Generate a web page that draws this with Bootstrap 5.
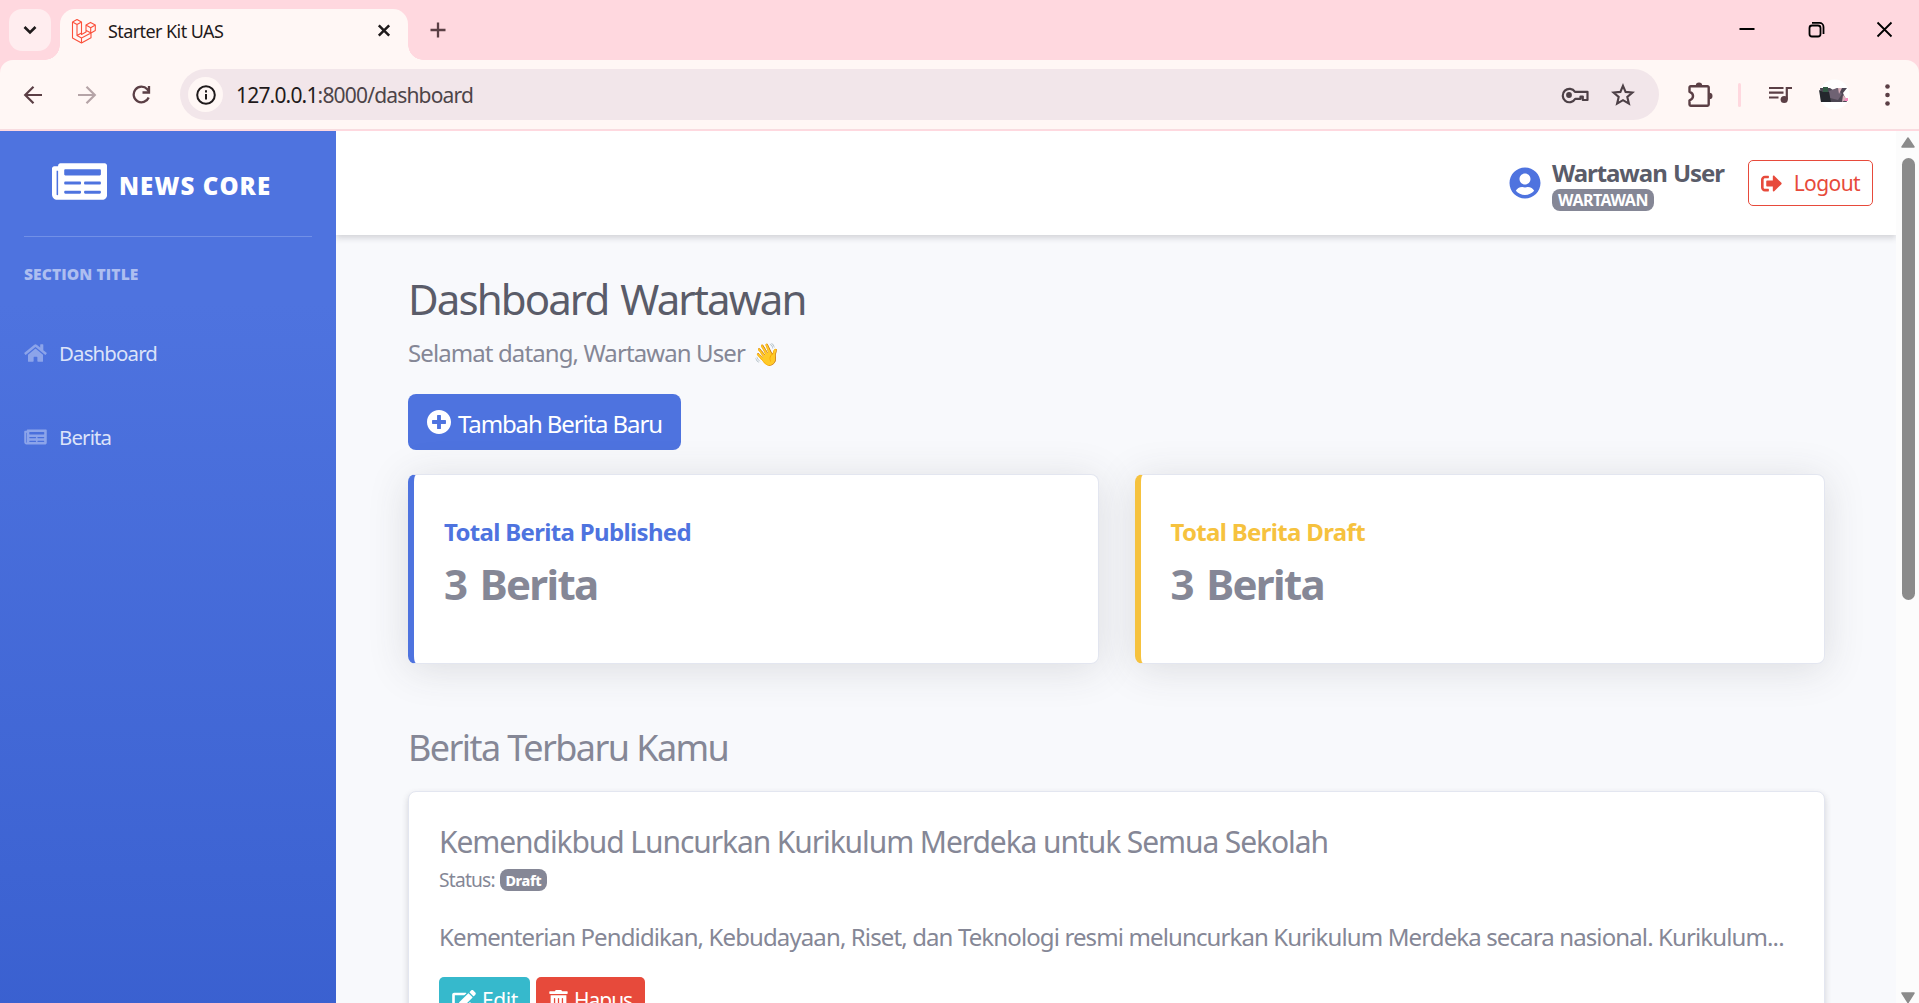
<!DOCTYPE html>
<html lang="id">
<head>
<meta charset="utf-8">
<title>Starter Kit UAS</title>
<link href="https://cdn.jsdelivr.net/npm/bootstrap@5.3.0/dist/css/bootstrap.min.css" rel="stylesheet">
<script src="https://cdn.jsdelivr.net/npm/bootstrap@5.3.0/dist/js/bootstrap.bundle.min.js"></script>
<style>
  body { font-family: "Noto Sans", "Open Sans", sans-serif; height: 1003px; overflow: hidden; background: #fff; color: #858796; letter-spacing: -.036em; font-size: 24px; }
  svg { display: block; flex: none; }
  .text-line { white-space: nowrap; margin: 0; flex: none; }

  /* browser frame */
  .tab-strip { height: 60px; background: #ffd8df; padding-left: 9px; }
  .tab-search { width: 42px; height: 42px; margin: 9px 9px 0 0; border-radius: 13px; background: #ffedef; color: #1f1a1b; }
  .browser-tab { width: 348px; height: 51px; margin-top: 9px; border-radius: 15px 15px 0 0; background: #fff7f5; padding: 0 17px 8px 11px; position: relative; color: #1f1a1b; }
  .browser-tab::before, .browser-tab::after { content: ""; position: absolute; bottom: 0; width: 15px; height: 15px; }
  .browser-tab::before { left: -15px; background: radial-gradient(circle at 0 0, transparent 14.5px, #fff7f5 15px); }
  .browser-tab::after { right: -15px; background: radial-gradient(circle at 100% 0, transparent 14.5px, #fff7f5 15px); }
  .tab-name { font-size: 18px; line-height: 24px; letter-spacing: -.58px; margin-left: 11px; padding-top: 1px; }
  .new-tab { margin: 22px 0 0 22px; }
  .window-keys { margin: 21px 26px 0 0; }
  .toolbar-wrap { background: #ffd8df; height: 71px; }
  .tool-bar { height: 70px; background: #fff7f5; border-radius: 13px 13px 0 0; border-bottom: 1px solid #f8dce0; padding: 9px 29px 0 23px; color: #5b3f45; }
  .tool-group { height: 51px; }
  .key-forward { margin: 0 34px 0 35px; }
  .omni-box { height: 51px; width: 1479px; margin-left: 28px; border-radius: 26px; background: #f2e6ea; padding: 0 24px 0 8px; }
  .site-info { width: 35px; height: 35px; border-radius: 50%; background: #fff7f5; color: #1f1a1b; }
  .web-address { font-size: 21px; line-height: 30px; letter-spacing: -.82px; margin-left: 13px; color: #4d4448; }
  .web-address span { color: #1f1a1b; }
  .key-star { margin-left: 22px; }
  .key-puzzle { margin-left: 29px; }
  .tool-sep { width: 3px; height: 24px; background: #ffd8df; border-radius: 2px; margin: 0 28px 0 25px; }
  .key-avatar { margin-left: 26px; }

  /* application */
  .app-shell { height: 872px; }
  .side-bar { width: 336px; padding: 0 24px; background: linear-gradient(180deg, #4e73df 10%, #224abe 100%) 0 0 / 100% 1728px no-repeat; }
  .brand-row { height: 106px; border-bottom: 1px solid #7190e7; padding: 0 0 5px 28px; color: #fff; }
  .brand-name { font-family: "Open Sans", "Noto Sans", sans-serif; font-size: 24px; font-weight: 800; letter-spacing: 1.1px; line-height: 30px; margin: 9px 0 0 12px; }
  .side-heading { font-family: "Open Sans", "Noto Sans", sans-serif; font-size: 15.6px; font-weight: 800; letter-spacing: .09px; line-height: 20px; color: #adbef0; margin: 27px 0; }
  .side-link { height: 84px; font-size: 20.4px; letter-spacing: -.84px; color: #dce3f9; gap: 12px; }
  .side-link svg { color: #8ca4ea; }
  .main-pane { background: #f8f9fc; overflow: hidden; }
  .top-bar { height: 104px; background: #fff; box-shadow: 0 3px 6px rgba(58,59,69,.2); padding: 0 23px 0 0; }
  .user-block { width: 172px; margin: 4px 0 0 11px; }
  .user-name { font-size: 24px; font-weight: 700; line-height: 28px; letter-spacing: -1.05px; word-spacing: 1px; color: #5a5c69; }
  .role-badge { height: 22px; width: 102px; margin-top: 2px; border-radius: 8px; background: #858796; color: #fff; font-size: 16px; font-weight: 700; line-height: 23px; letter-spacing: -.5px; }
  .logout-btn { width: 125px; height: 46px; border: 1px solid #e74a3b; border-radius: 5px; color: #e74a3b; font-size: 21px; letter-spacing: -.6px; margin-left: 24px; padding: 0 12px 0 12px; }
  .logout-btn span { padding-top: 2px; }
  .page-body { padding: 39px 71px 0 72px; }
  .page-title { font-size: 42px; line-height: 50px; letter-spacing: -1.9px; word-spacing: 3px; font-weight: 400; color: #5a5c69; }
  .hello-line { font-size: 24px; line-height: 36px; letter-spacing: -.9px; margin-top: 11px; }
  .hello-line span { margin-left: 3px; font-size: 22px; }
  .add-btn { width: 273px; height: 56px; margin-top: 23px; border-radius: 8px; background: #4e73df; color: #fff; font-size: 24px; letter-spacing: -1.12px; padding-left: 19px; gap: 7px; }
  .add-btn span { padding-top: 3px; }
  .stat-row { margin-top: 24px; gap: 36px; }
  .stat-card { height: 190px; background: #fff; border: 1px solid #e3e6f0; border-left-width: 6px; border-radius: 8px; box-shadow: 0 5px 40px rgba(58,59,69,.15); padding: 43px 30px 0; }
  .stat-blue { border-left-color: #4e73df; }
  .stat-gold { border-left-color: #f6c23e; }
  .stat-label { font-size: 24px; font-weight: 700; line-height: 28px; letter-spacing: -.67px; }
  .stat-blue .stat-label { color: #4e73df; }
  .stat-gold .stat-label { color: #f6c23e; }
  .stat-value { font-size: 42px; font-weight: 700; line-height: 50px; letter-spacing: -1.65px; word-spacing: 4px; margin-top: 13px; }
  .latest-title { font-size: 36px; line-height: 44px; letter-spacing: -1.58px; font-weight: 400; margin-top: 62px; }
  .news-card { height: 400px; background: #fff; border: 1px solid #e3e6f0; border-radius: 8px; box-shadow: 0 3px 6px rgba(58,59,69,.2); margin-top: 21px; padding: 32px 30px 0; }
  .news-title { font-size: 30px; line-height: 36px; letter-spacing: -1.09px; font-weight: 400; }
  .status-line { font-size: 19.2px; line-height: 30px; letter-spacing: -.78px; height: 30px; margin-top: 5px; gap: 5px; }
  .status-badge { width: 47px; height: 22px; border-radius: 8px; background: #858796; color: #fff; font-weight: 800; font-size: 14.4px; line-height: 23px; letter-spacing: -.36px; }
  .news-text { font-size: 24px; line-height: 36px; letter-spacing: -.88px; margin-top: 24px; }
  .act-row { gap: 6px; margin-top: 22px; }
  .act-btn { height: 47px; border-radius: 5px; color: #fff; font-size: 21px; padding: 0 0 0 13px; gap: 6px; }
  .act-edit { width: 91px; background: #36b9cc; letter-spacing: -.4px; }
  .act-del { width: 109px; background: #e74a3b; letter-spacing: -1.03px; }
  .scroll-rail { width: 23px; background: #fcfcfc; padding: 6px 4px 0 5px; }
  .scroll-thumb { width: 13px; height: 442px; border-radius: 7px; background: #8b8b8b; margin-top: 10px; }
</style>
</head>
<body>
<svg width="0" height="0" class="position-absolute">
  <symbol id="i-news" viewBox="0 0 576 512"><path fill="currentColor" d="M552 64H88c-13.255 0-24 10.745-24 24v8H24c-13.255 0-24 10.745-24 24v272c0 30.928 25.072 56 56 56h472c26.51 0 48-21.49 48-48V88c0-13.255-10.745-24-24-24zM56 400a8 8 0 0 1-8-8V144h16v248a8 8 0 0 1-8 8zm236-16H140c-6.627 0-12-5.373-12-12v-8c0-6.627 5.373-12 12-12h152c6.627 0 12 5.373 12 12v8c0 6.627-5.373 12-12 12zm208 0H348c-6.627 0-12-5.373-12-12v-8c0-6.627 5.373-12 12-12h152c6.627 0 12 5.373 12 12v8c0 6.627-5.373 12-12 12zm-208-96H140c-6.627 0-12-5.373-12-12v-8c0-6.627 5.373-12 12-12h152c6.627 0 12 5.373 12 12v8c0 6.627-5.373 12-12 12zm208 0H348c-6.627 0-12-5.373-12-12v-8c0-6.627 5.373-12 12-12h152c6.627 0 12 5.373 12 12v8c0 6.627-5.373 12-12 12zm0-96H140c-6.627 0-12-5.373-12-12v-40c0-6.627 5.373-12 12-12h360c6.627 0 12 5.373 12 12v40c0 6.627-5.373 12-12 12z"/></symbol>
</svg>

<header>
  <div class="tab-strip d-flex">
    <div class="tab-search d-flex align-items-center justify-content-center">
      <svg width="14" height="10" viewBox="0 0 14 10" fill="none" stroke="currentColor" stroke-width="2.6"><path d="M1.5 2l5.5 5.5L12.500 2"/></svg>
    </div>
    <div class="browser-tab d-flex align-items-center">
      <svg width="26" height="26" viewBox="0 0 26 26" fill="none" stroke="#fb503b" stroke-width="1.1" stroke-linejoin="round"><path d="M1.500 4L6 1.500 10.500 4v12.500L15 14V7l4.500-2.600L24.300 7v5.500L20 15v4.800L10.500 25 1.500 20V4L6 6.500 10.500 4M6 6.500v11L10.500 20 20 15l-4.700-2.500M6 17.500l4.500-2.500M10.500 20v5M15 7l4.700 2.700L24.300 7M19.700 9.700V15"/></svg>
      <span class="tab-name text-line">Starter Kit UAS</span>
      <svg class="ms-auto" width="14" height="14" viewBox="0 0 14 14" stroke="currentColor" stroke-width="2.5"><path d="M1.800 1.300l10.400 10.400M12.200 1.300L1.800 11.700"/></svg>
    </div>
    <svg class="new-tab" width="16" height="16" viewBox="0 0 16 16" stroke="#5b3f45" stroke-width="2.3"><path d="M8 .5v15M.5 8h15"/></svg>
    <svg class="window-keys ms-auto" width="155" height="17" viewBox="0 0 155 17" fill="none" stroke="#000" stroke-width="1.800"><path d="M1.500 8h15M139.500 1.500l14 14M153.500 1.500l-14 14"/><rect x="71.500" y="4.500" width="11" height="11" rx="2.500"/><path d="M74 1.900h7.500a4 4 0 0 1 4 4v7"/></svg>
  </div>
  <div class="toolbar-wrap">
    <div class="tool-bar d-flex">
      <div class="tool-group d-flex align-items-center">
        <svg width="20" height="20" viewBox="0 0 20 20" fill="none" stroke="currentColor" stroke-width="2.2"><path d="M19 10H3M10.500 1.700L2.200 10l8.300 8.300"/></svg>
        <svg class="key-forward" width="20" height="20" viewBox="0 0 20 20" fill="none" stroke="#b5a4a7" stroke-width="2.2"><path d="M0 10h16M8.500 1.700l8.300 8.300-8.300 8.300"/></svg>
        <svg width="20" height="20" viewBox="0 0 20 20" fill="none" stroke="currentColor" stroke-width="2.300"><path d="M16.700 12.500a7.800 7.800 0 1 1-1.400-8.200L17 6.500"/><path d="M17 1v6.500h-6.500"/></svg>
      </div>
      <div class="omni-box d-flex align-items-center">
        <div class="site-info d-flex align-items-center justify-content-center">
          <svg width="20" height="20" viewBox="0 0 20 20" fill="none" stroke="currentColor" stroke-width="2"><circle cx="10" cy="10" r="8.800"/><path d="M10 9v5.500M10 5.300v2.200"/></svg>
        </div>
        <div class="web-address text-line"><span>127.0.0.1</span>:8000/dashboard</div>
        <svg class="ms-auto" width="28" height="18" viewBox="0 0 28 18" fill="none" stroke="#4d4046" stroke-width="2.200"><path d="M14 5.800h12.500v8.200h-4.700v-3.500h-2.300v2.300h-5.200A6.700 6.700 0 1 1 14 5.800z" stroke-linejoin="round"/><circle cx="8" cy="9" r="2.900" fill="#4d4046" stroke="none"/></svg>
        <svg class="key-star" width="24" height="24" viewBox="0 0 24 24" fill="none" stroke="#4d4046" stroke-width="2.100"><path d="M12 2.800l2.600 6.100 6.900.6-5.200 4.500 1.600 6.700-5.900-3.500-5.900 3.500 1.600-6.700-5.200-4.500 6.900-.6z"/></svg>
      </div>
      <div class="tool-group d-flex align-items-center flex-fill">
        <svg class="key-puzzle" width="25" height="26" viewBox="0 0 25 26" fill="none" stroke="currentColor" stroke-width="2.400"><path d="M1.500 5.500a1.200 1.200 0 0 1 1.200-1.200h16.800a1.200 1.200 0 0 1 1.200 1.200v17a1.200 1.200 0 0 1-1.200 1.200H2.700a1.200 1.200 0 0 1-1.200-1.200v-4.200c4.700-1.500 4.700-7 0-8.500z" stroke-linejoin="round"/><path d="M7.800 3.800a3.200 3.200 0 0 1 6.400 0zM21.300 10.800a3.200 3.200 0 0 1 0 6.400z" fill="currentColor" stroke="none"/></svg>
        <div class="tool-sep"></div>
        <svg width="24" height="18" viewBox="0 0 24 18" fill="none" stroke="currentColor" stroke-width="2.200"><path d="M0 2h14.500M0 6.700h14.500M0 11.500h9.500M17.800 13.500V2H23"/><circle cx="15.200" cy="13.500" r="3.600" fill="currentColor" stroke="none"/></svg>
        <svg class="key-avatar" width="31" height="31" viewBox="0 0 31 31"><circle cx="15.500" cy="15.500" r="15" fill="#fff"/><path d="M1 9h10l3 2 5-2h9l-4 5 4 9H2z" fill="#4d4754"/><path d="M4 8h5v6H4z" fill="#345b46"/><path d="M10 12l8-3 5 6-4 6-8-2z" fill="#6f6273"/><path d="M19 9h4l-3 6zM24 16l4 4-5 3z" fill="#d8b1bb"/><path d="M0 11l4 2 6 0 2 10H2z" fill="#24272d"/><path d="M27 19h2v3h-4z" fill="#f58cc0"/></svg>
        <svg class="ms-auto" width="5" height="22" viewBox="0 0 5 22" fill="currentColor"><circle cx="2.500" cy="2.500" r="2.300"/><circle cx="2.500" cy="11" r="2.300"/><circle cx="2.500" cy="19.500" r="2.300"/></svg>
      </div>
    </div>
  </div>
</header>

<div class="app-shell d-flex">
  <nav class="side-bar flex-shrink-0">
    <div class="brand-row d-flex align-items-center">
      <svg width="55" height="49"><use href="#i-news"/></svg>
      <div class="brand-name text-line">NEWS CORE</div>
    </div>
    <div class="side-heading text-line">SECTION TITLE</div>
    <div class="side-link d-flex align-items-center">
      <svg width="23" height="20" viewBox="0 0 576 512"><path fill="currentColor" d="M280.370 148.260L96 300.110V464a16 16 0 0 0 16 16l112.060-.29a16 16 0 0 0 15.920-16V368a16 16 0 0 1 16-16h64a16 16 0 0 1 16 16v95.640a16 16 0 0 0 16 16.050L464 480a16 16 0 0 0 16-16V300L295.670 148.260a12.190 12.190 0 0 0-15.300 0zM571.600 251.470L488 182.560V44.050a12 12 0 0 0-12-12h-56a12 12 0 0 0-12 12v72.610L318.470 43a48 48 0 0 0-61 0L4.340 251.470a12 12 0 0 0-1.600 16.900l25.500 31A12 12 0 0 0 45.150 301l235.220-193.740a12.190 12.190 0 0 1 15.300 0L530.900 301a12 12 0 0 0 16.900-1.600l25.500-31a12 12 0 0 0-1.700-16.930z"/></svg>
      <span class="text-line">Dashboard</span>
    </div>
    <div class="side-link d-flex align-items-center">
      <svg width="23" height="20"><use href="#i-news"/></svg>
      <span class="text-line">Berita</span>
    </div>
  </nav>

  <main class="main-pane flex-fill">
    <div class="top-bar d-flex align-items-center justify-content-end">
      <svg width="32" height="32" viewBox="0 0 496 512"><path fill="#4e73df" d="M248 8C111 8 0 119 0 256s111 248 248 248 248-111 248-248S385 8 248 8zm0 96c48.600 0 88 39.400 88 88s-39.400 88-88 88-88-39.400-88-88 39.400-88 88-88zm0 344c-58.700 0-111.300-26.600-146.500-68.200 18.800-35.400 55.600-59.800 98.500-59.800 2.400 0 4.800.4 7.100 1.100 13 4.200 26.600 6.900 40.900 6.900 14.300 0 28-2.700 40.900-6.900 2.300-.7 4.700-1.100 7.100-1.100 42.900 0 79.700 24.400 98.500 59.800C359.300 421.400 306.700 448 248 448z"/></svg>
      <div class="user-block">
        <div class="user-name text-line">Wartawan User</div>
        <div class="role-badge text-center">WARTAWAN</div>
      </div>
      <div class="logout-btn d-flex align-items-center justify-content-between">
        <svg width="21" height="21" viewBox="0 0 512 512"><path fill="currentColor" d="M497 273L329 441c-15 15-41 4.500-41-17v-96H152c-13.300 0-24-10.700-24-24v-96c0-13.300 10.700-24 24-24h136V88c0-21.400 25.900-32 41-17l168 168c9.300 9.400 9.300 24.600 0 34zM192 436v-40c0-6.600-5.400-12-12-12H96c-17.700 0-32-14.300-32-32V160c0-17.700 14.300-32 32-32h84c6.600 0 12-5.400 12-12V76c0-6.600-5.400-12-12-12H96c-53 0-96 43-96 96v192c0 53 43 96 96 96h84c6.600 0 12-5.400 12-12z"/></svg>
        <span class="text-line">Logout</span>
      </div>
    </div>

    <div class="page-body">
      <h1 class="page-title text-line">Dashboard Wartawan</h1>
      <p class="hello-line text-line">Selamat datang, Wartawan User <span>👋</span></p>
      <div class="add-btn d-flex align-items-center">
        <svg width="24" height="24" viewBox="8 8 496 496"><path fill="currentColor" d="M256 8C119 8 8 119 8 256s111 248 248 248 248-111 248-248S393 8 256 8zm144 276c0 6.600-5.400 12-12 12h-92v92c0 6.600-5.400 12-12 12h-56c-6.600 0-12-5.400-12-12v-92h-92c-6.600 0-12-5.400-12-12v-56c0-6.600 5.400-12 12-12h92v-92c0-6.600 5.400-12 12-12h56c6.600 0 12 5.400 12 12v92h92c6.600 0 12 5.400 12 12v56z"/></svg>
        <span class="text-line">Tambah Berita Baru</span>
      </div>

      <div class="stat-row d-flex">
        <div class="stat-card stat-blue flex-fill w-50">
          <div class="stat-label text-line">Total Berita Published</div>
          <div class="stat-value text-line">3 Berita</div>
        </div>
        <div class="stat-card stat-gold flex-fill w-50">
          <div class="stat-label text-line">Total Berita Draft</div>
          <div class="stat-value text-line">3 Berita</div>
        </div>
      </div>

      <h3 class="latest-title mb-0">Berita Terbaru Kamu</h3>
      <div class="news-card">
        <h5 class="news-title text-line">Kemendikbud Luncurkan Kurikulum Merdeka untuk Semua Sekolah</h5>
        <div class="status-line d-flex align-items-center">
          <span class="text-line">Status:</span>
          <span class="status-badge text-center">Draft</span>
        </div>
        <p class="news-text text-line">Kementerian Pendidikan, Kebudayaan, Riset, dan Teknologi resmi meluncurkan Kurikulum Merdeka secara nasional. Kurikulum...</p>
        <div class="act-row d-flex">
          <div class="act-btn act-edit d-flex align-items-center">
            <svg width="24" height="21" viewBox="0 0 576 512"><path fill="currentColor" d="M402.600 83.200l90.200 90.200c3.800 3.800 3.800 10 0 13.800L274.400 405.600l-92.800 10.300c-12.400 1.400-22.900-9.100-21.500-21.500l10.300-92.800L388.800 83.200c3.800-3.800 10-3.800 13.800 0zm162-22.900l-48.800-48.800c-15.200-15.200-39.900-15.200-55.200 0l-35.400 35.400c-3.800 3.800-3.800 10 0 13.800l90.200 90.200c3.800 3.800 10 3.800 13.800 0l35.400-35.400c15.200-15.300 15.200-40 0-55.200zM384 346.200V448H64V128h229.800c3.200 0 6.200-1.300 8.500-3.500l40-40c7.600-7.600 2.200-20.500-8.500-20.500H48C21.500 64 0 85.500 0 112v352c0 26.500 21.500 48 48 48h352c26.500 0 48-21.500 48-48V306.200c0-10.700-12.900-16-20.500-8.500l-40 40c-2.200 2.300-3.500 5.300-3.500 8.500z"/></svg>
            <span class="text-line">Edit</span>
          </div>
          <div class="act-btn act-del d-flex align-items-center">
            <svg width="19" height="21" viewBox="0 0 448 512"><path fill="currentColor" d="M32 464a48 48 0 0 0 48 48h288a48 48 0 0 0 48-48V128H32zm272-256a16 16 0 0 1 32 0v224a16 16 0 0 1-32 0zm-96 0a16 16 0 0 1 32 0v224a16 16 0 0 1-32 0zm-96 0a16 16 0 0 1 32 0v224a16 16 0 0 1-32 0zM432 32H312l-9.400-18.700A24 24 0 0 0 281.100 0H166.800a23.720 23.720 0 0 0-21.400 13.300L136 32H16A16 16 0 0 0 0 48v32a16 16 0 0 0 16 16h416a16 16 0 0 0 16-16V48a16 16 0 0 0-16-16z"/></svg>
            <span class="text-line">Hapus</span>
          </div>
        </div>
      </div>
    </div>
  </main>

  <div class="scroll-rail d-flex flex-column align-items-center flex-shrink-0">
    <svg width="14" height="11" viewBox="0 0 14 11" fill="#8b8b8b" stroke="#8b8b8b" stroke-width="1.500" stroke-linejoin="round"><path d="M7 1l6 9H1z"/></svg>
    <div class="scroll-thumb"></div>
    <svg class="mt-auto" width="14" height="11" viewBox="0 0 14 11" fill="#8b8b8b" stroke="#8b8b8b" stroke-width="1.500" stroke-linejoin="round"><path d="M1 1h12L7 10.500z"/></svg>
  </div>
</div>
</body>
</html>
